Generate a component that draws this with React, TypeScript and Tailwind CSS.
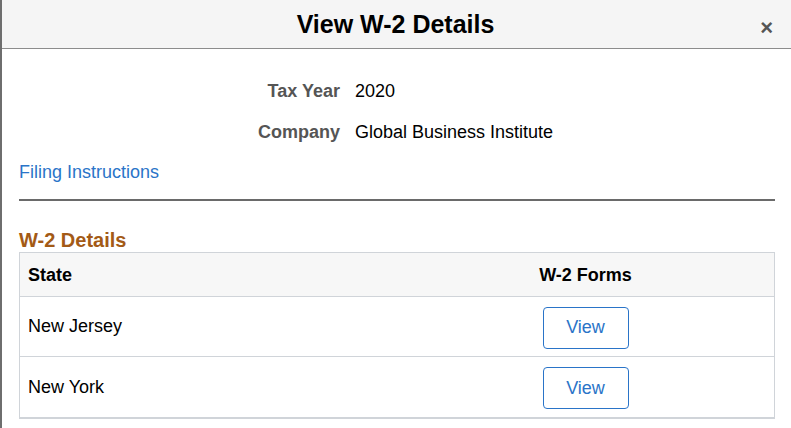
import React from "react";

export default function App() {
  const rows = ["New Jersey", "New York"];
  return (
    <div
      className="w-[791px] h-[428px] overflow-hidden bg-white border-l-2 border-[#6e6e6e] text-black"
      style={{ fontFamily: '"Liberation Sans", Arial, sans-serif' }}
    >
      <div className="relative h-[49px] bg-[#f5f5f5] border-b border-[#8c8c8c] flex items-center justify-center">
        <h1 className="text-[25px] leading-none font-bold text-black pr-[2px] pt-[1px]">View W-2 Details</h1>
        <button className="absolute right-[18px] top-[17px] text-[#555] text-[22px] leading-none font-bold">×</button>
      </div>
      <div className="pl-[17px] pr-[16px]">
        <div className="pt-[31px] flex flex-col gap-[19px]">
          <div className="flex items-center text-[18px] leading-[22px]">
            <div className="w-[321px] text-right font-bold text-[#555]">Tax Year</div>
            <div className="pl-[15px]">2020</div>
          </div>
          <div className="flex items-center text-[18px] leading-[22px]">
            <div className="w-[321px] text-right font-bold text-[#555]">Company</div>
            <div className="pl-[15px]">Global Business Institute</div>
          </div>
        </div>
        <div className="mt-[18px] text-[18px] leading-[22px] text-[#2a74c8]">Filing Instructions</div>
        <div className="mt-[16px] h-[2px] bg-[#6a6a6a]"></div>
        <div className="mt-[27px] text-[20px] leading-[24px] font-bold text-[#a35a16]">W-2 Details</div>
        <div className="border border-[#d0d4d9] border-b-2">
          <div className="grid grid-cols-2 h-[44px] pt-[2px] bg-[#f7f7f7] border-b border-[#d0d4d9] items-center text-[18px] font-bold">
            <div className="pl-[8px]">State</div>
            <div className="text-center">W-2 Forms</div>
          </div>
          {rows.map((r, i) => (
            <div
              key={r}
              className={`grid grid-cols-2 h-[60px] items-center text-[18px] ${i < rows.length - 1 ? "border-b border-[#d0d4d9]" : "h-[59px]"}`}
            >
              <div className="pl-[8px]">{r}</div>
              <div className="flex justify-center pt-[2px]">
                <button className="w-[86px] h-[42px] rounded-[4px] border border-[#2a74c8] bg-white text-[#2a74c8] text-[18px]">
                  View
                </button>
              </div>
            </div>
          ))}
        </div>
      </div>
    </div>
  );
}
